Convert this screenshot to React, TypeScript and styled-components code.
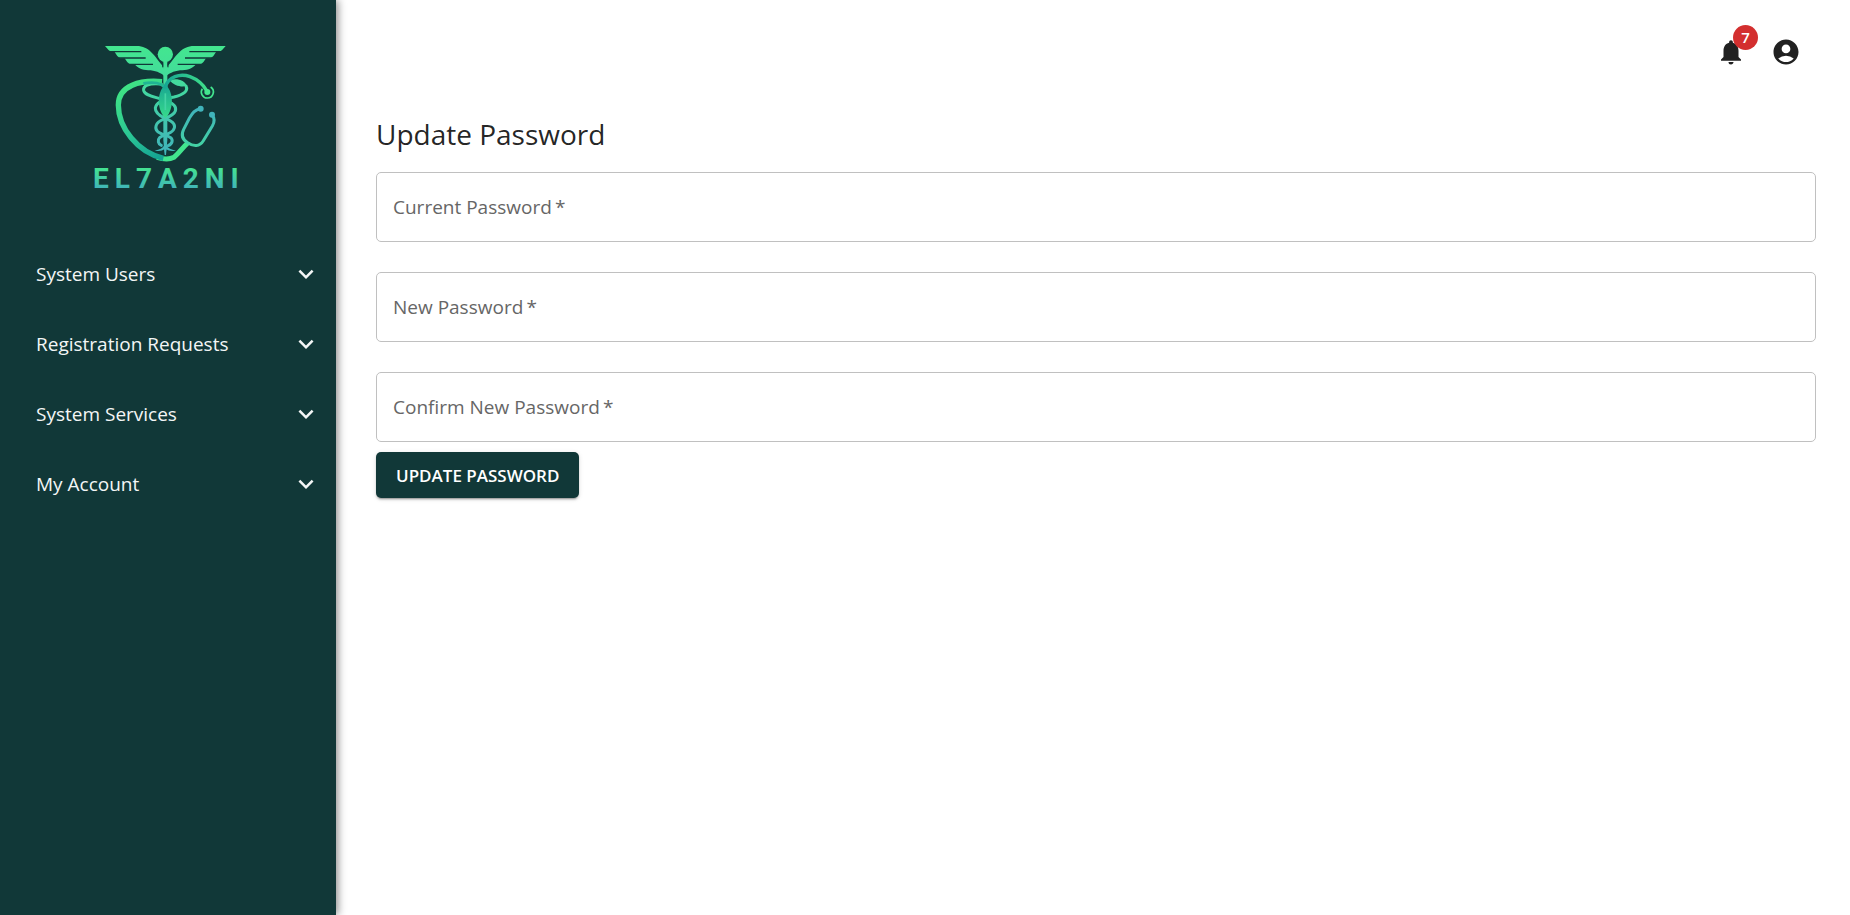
import React, { useId } from "react";
import styled, { createGlobalStyle } from "styled-components";
import { MdAccountCircle, MdExpandMore, MdNotifications } from "react-icons/md";

const brand = "#113838";

const GlobalStyle = createGlobalStyle`
  *, *::before, *::after { box-sizing: border-box; }
  body {
    margin: 0;
    background: #fff;
    color: rgba(0, 0, 0, 0.87);
    font-family: "Segoe UI", "Open Sans", sans-serif;
  }
  button, input { font: inherit; }
`;

const Page = styled.div`
  display: flex;
  min-height: 100vh;
`;

const Sidebar = styled.aside`
  flex: 0 0 336px;
  display: flex;
  flex-direction: column;
  align-items: stretch;
  padding-top: 30px;
  background: ${brand};
  box-shadow: 2px 0 8px rgba(0, 0, 0, 0.45);
`;

const LogoLink = styled.a`
  display: block;
  align-self: center;
  width: 176px;
  height: 170px;
`;

const Menu = styled.nav`
  display: flex;
  flex-direction: column;
  margin-top: 39px;
`;

const MenuButton = styled.button`
  display: flex;
  align-items: center;
  justify-content: space-between;
  height: 70px;
  padding: 0 15px 0 36px;
  border: 0;
  background: none;
  color: #f3f6f6;
  font-size: 19px;
  text-align: left;
  cursor: pointer;

  svg { font-size: 30px; }
`;

const Main = styled.main`
  flex: 1;
  min-width: 0;
  padding: 32px 34px 40px 40px;
`;

const Toolbar = styled.header`
  display: flex;
  justify-content: flex-end;
  gap: 15px;
  padding-right: 10px;
`;

const IconButton = styled.button`
  position: relative;
  display: flex;
  padding: 5px;
  border: 0;
  background: none;
  color: #212121;
  font-size: 30px;
  cursor: pointer;
`;

const Badge = styled.span`
  position: absolute;
  top: -7px;
  right: -7px;
  width: 25px;
  height: 25px;
  border-radius: 50%;
  background: #d32f2f;
  color: #fff;
  font-size: 15px;
  font-weight: 600;
  line-height: 25px;
  text-align: center;
`;

const Title = styled.h1`
  margin: 40px 0 16px;
  font-size: 28px;
  font-weight: 400;
  line-height: 44px;
`;

const Form = styled.form`
  display: flex;
  flex-direction: column;
  align-items: flex-start;
`;

const FieldList = styled.div`
  display: grid;
  gap: 30px;
  width: 100%;
  margin-bottom: 10px;
`;

const Field = styled.div`
  display: grid;
  align-items: center;

  > * { grid-area: 1 / 1; }
`;

const Input = styled.input`
  width: 100%;
  height: 70px;
  padding: 0 17px;
  border: 1px solid #c0c0c0;
  border-radius: 5px;
  background: transparent;
  font-size: 19px;
  outline: none;

  &:focus { border-color: ${brand}; }
`;

const Label = styled.label`
  justify-self: start;
  padding: 0 17px;
  color: #666;
  font-size: 19px;
  line-height: 28px;
  pointer-events: none;

  ${Field}:focus-within &, ${Field}:has(input:not(:placeholder-shown)) & {
    visibility: hidden;
  }
`;

const SubmitButton = styled.button`
  height: 46px;
  padding: 0 20px;
  border: 0;
  border-radius: 5px;
  background: ${brand};
  box-shadow: 0 3px 1px -2px rgba(0, 0, 0, 0.2), 0 2px 2px rgba(0, 0, 0, 0.14), 0 1px 5px rgba(0, 0, 0, 0.12);
  color: #fff;
  font-size: 17px;
  font-weight: 600;
  text-transform: uppercase;
  cursor: pointer;
`;

const Wordmark = styled.text`
  font-family: Roboto, sans-serif;
  font-size: 84px;
  font-weight: 700;
  letter-spacing: 18px;
`;

const wing =
  "M75 48H170C208 48 222 76 251 112L256 142C246 130 232 124 212 121C192 120 178 118 165 104H151Q140 97 134 85H120Q110 78 104 66H94Q84 60 75 48Z";

function Logo() {
  return (
    <svg width="176" height="170" viewBox="0 0 528 510" role="img" aria-label="EL7A2NI">
      <defs>
        <linearGradient id="staff" gradientUnits="userSpaceOnUse" x1="0" y1="50" x2="0" y2="370">
          <stop offset="0" stopColor="#43e68f" />
          <stop offset="0.4" stopColor="#43d8a0" />
          <stop offset="1" stopColor="#40b4bb" />
        </linearGradient>
        <linearGradient id="heart" gradientUnits="userSpaceOnUse" x1="120" y1="180" x2="240" y2="385">
          <stop offset="0" stopColor="#3fe385" />
          <stop offset="0.55" stopColor="#2bc795" />
          <stop offset="1" stopColor="#14a293" />
        </linearGradient>
        <linearGradient id="tube" gradientUnits="userSpaceOnUse" x1="256" y1="0" x2="385" y2="0">
          <stop offset="0" stopColor="#17a693" />
          <stop offset="1" stopColor="#40e28a" />
        </linearGradient>
        <linearGradient id="leaf" gradientUnits="userSpaceOnUse" x1="0" y1="160" x2="0" y2="265">
          <stop offset="0" stopColor="#17a392" />
          <stop offset="1" stopColor="#38dc8c" />
        </linearGradient>
        <linearGradient id="scope" gradientUnits="userSpaceOnUse" x1="0" y1="240" x2="0" y2="350">
          <stop offset="0" stopColor="#40b4bb" />
          <stop offset="1" stopColor="#43d3a4" />
        </linearGradient>
        <linearGradient id="word" gradientUnits="userSpaceOnUse" x1="0" y1="414" x2="0" y2="474">
          <stop offset="0" stopColor="#44e391" />
          <stop offset="1" stopColor="#40b6b8" />
        </linearGradient>
      </defs>

      <g fill="url(#staff)">
        <path d={wing} />
        <path d={wing} transform="matrix(-1 0 0 1 512 0)" />
        <circle cx="256" cy="73" r="23" />
        <path d="M250 92H262V330L258 375H254L250 330Z" />
        <path d="M268 150C292 144 315 150 320 168C304 172 282 168 268 150Z" />
        <path d="M224 362Q246 359 253 346H259Q266 359 288 362Q267 365 259 358L256 376L253 358Q245 365 224 362Z" />
      </g>
      <g stroke={brand} strokeWidth="4" fill="none">
        <path d="M88 65H184M116 84H197M146 103H219" />
        <path d="M424 65H328M396 84H315M366 103H293" />
        <path d="M248 100V112M264 100V112" strokeWidth="3" />
      </g>

      <g fill="none" stroke="url(#staff)" strokeWidth="9" strokeLinecap="round">
        <path d="M244 162C205 158 188 168 191 182C196 199 226 200 256 211C282 220 290 231 286 243C282 256 260 263 248 269C225 279 224 295 232 304C240 313 262 316 272 323C280 330 277 343 264 347" />
        <path d="M318 168C326 184 309 194 282 201C246 208 228 220 226 234C225 249 240 258 256 265C284 276 288 288 280 300C272 312 249 314 239 323C232 330 234 342 244 346" />
      </g>

      <path d="M231 382C250 388 268 389 282 382C295 372 308 352 325 338" fill="none" stroke="#42e58e" strokeWidth="15" />
      <path
        d="M246 155C182 149 115 166 115 225C115 292 172 367 250 385"
        fill="none"
        stroke="url(#heart)"
        strokeWidth="16"
      />
      <path d="M190 160C224 155 250 160 256 178" fill="none" stroke="#20b494" strokeWidth="8" />
      <path d="M256 163C286 191 278 247 256 264C234 247 226 191 256 163Z" fill="url(#leaf)" />
      <path d="M256 190V240" stroke="#43d3a4" strokeWidth="5" />
      <path d="M254 176C263 138 302 130 330 140C354 149 369 163 380 182" fill="none" stroke="url(#tube)" strokeWidth="10" />
      <circle cx="382" cy="186" r="9" fill="#43e58e" />
      <path d="M367 176A18 18 0 0 0 382 204A18 18 0 0 0 392 171" fill="none" stroke="#43e58e" strokeWidth="5" />

      <path
        d="M362 236C343 239 337 250 328 265L311 298C302 316 308 329 323 338C341 350 359 350 370 332L397 288C405 274 405 265 396 255"
        fill="none"
        stroke="url(#scope)"
        strokeWidth="9"
      />
      <g fill="#40b4bb">
        <circle cx="362" cy="236" r="9" />
        <circle cx="396" cy="254" r="9" />
      </g>
      <Wordmark x="39" y="474" fill="url(#word)">EL7A2NI</Wordmark>
    </svg>
  );
}

const menuItems = ["System Users", "Registration Requests", "System Services", "My Account"];

function PasswordField({ label }: { label: string }) {
  const id = useId();
  return (
    <Field>
      <Input id={id} type="password" placeholder=" " required />
      <Label htmlFor={id}>{label}&thinsp;*</Label>
    </Field>
  );
}

export default function App() {
  return (
    <>
      <GlobalStyle />
      <Page>
        <Sidebar>
          <LogoLink href="#">
            <Logo />
          </LogoLink>
          <Menu>
            {menuItems.map((item) => (
              <MenuButton key={item} type="button">
                {item}
                <MdExpandMore aria-hidden />
              </MenuButton>
            ))}
          </Menu>
        </Sidebar>
        <Main>
          <Toolbar>
            <IconButton type="button" aria-label="Notifications">
              <MdNotifications />
              <Badge>7</Badge>
            </IconButton>
            <IconButton type="button" aria-label="Account">
              <MdAccountCircle />
            </IconButton>
          </Toolbar>
          <Title>Update Password</Title>
          <Form onSubmit={(event) => event.preventDefault()}>
            <FieldList>
              <PasswordField label="Current Password" />
              <PasswordField label="New Password" />
              <PasswordField label="Confirm New Password" />
            </FieldList>
            <SubmitButton type="submit">Update Password</SubmitButton>
          </Form>
        </Main>
      </Page>
    </>
  );
}
